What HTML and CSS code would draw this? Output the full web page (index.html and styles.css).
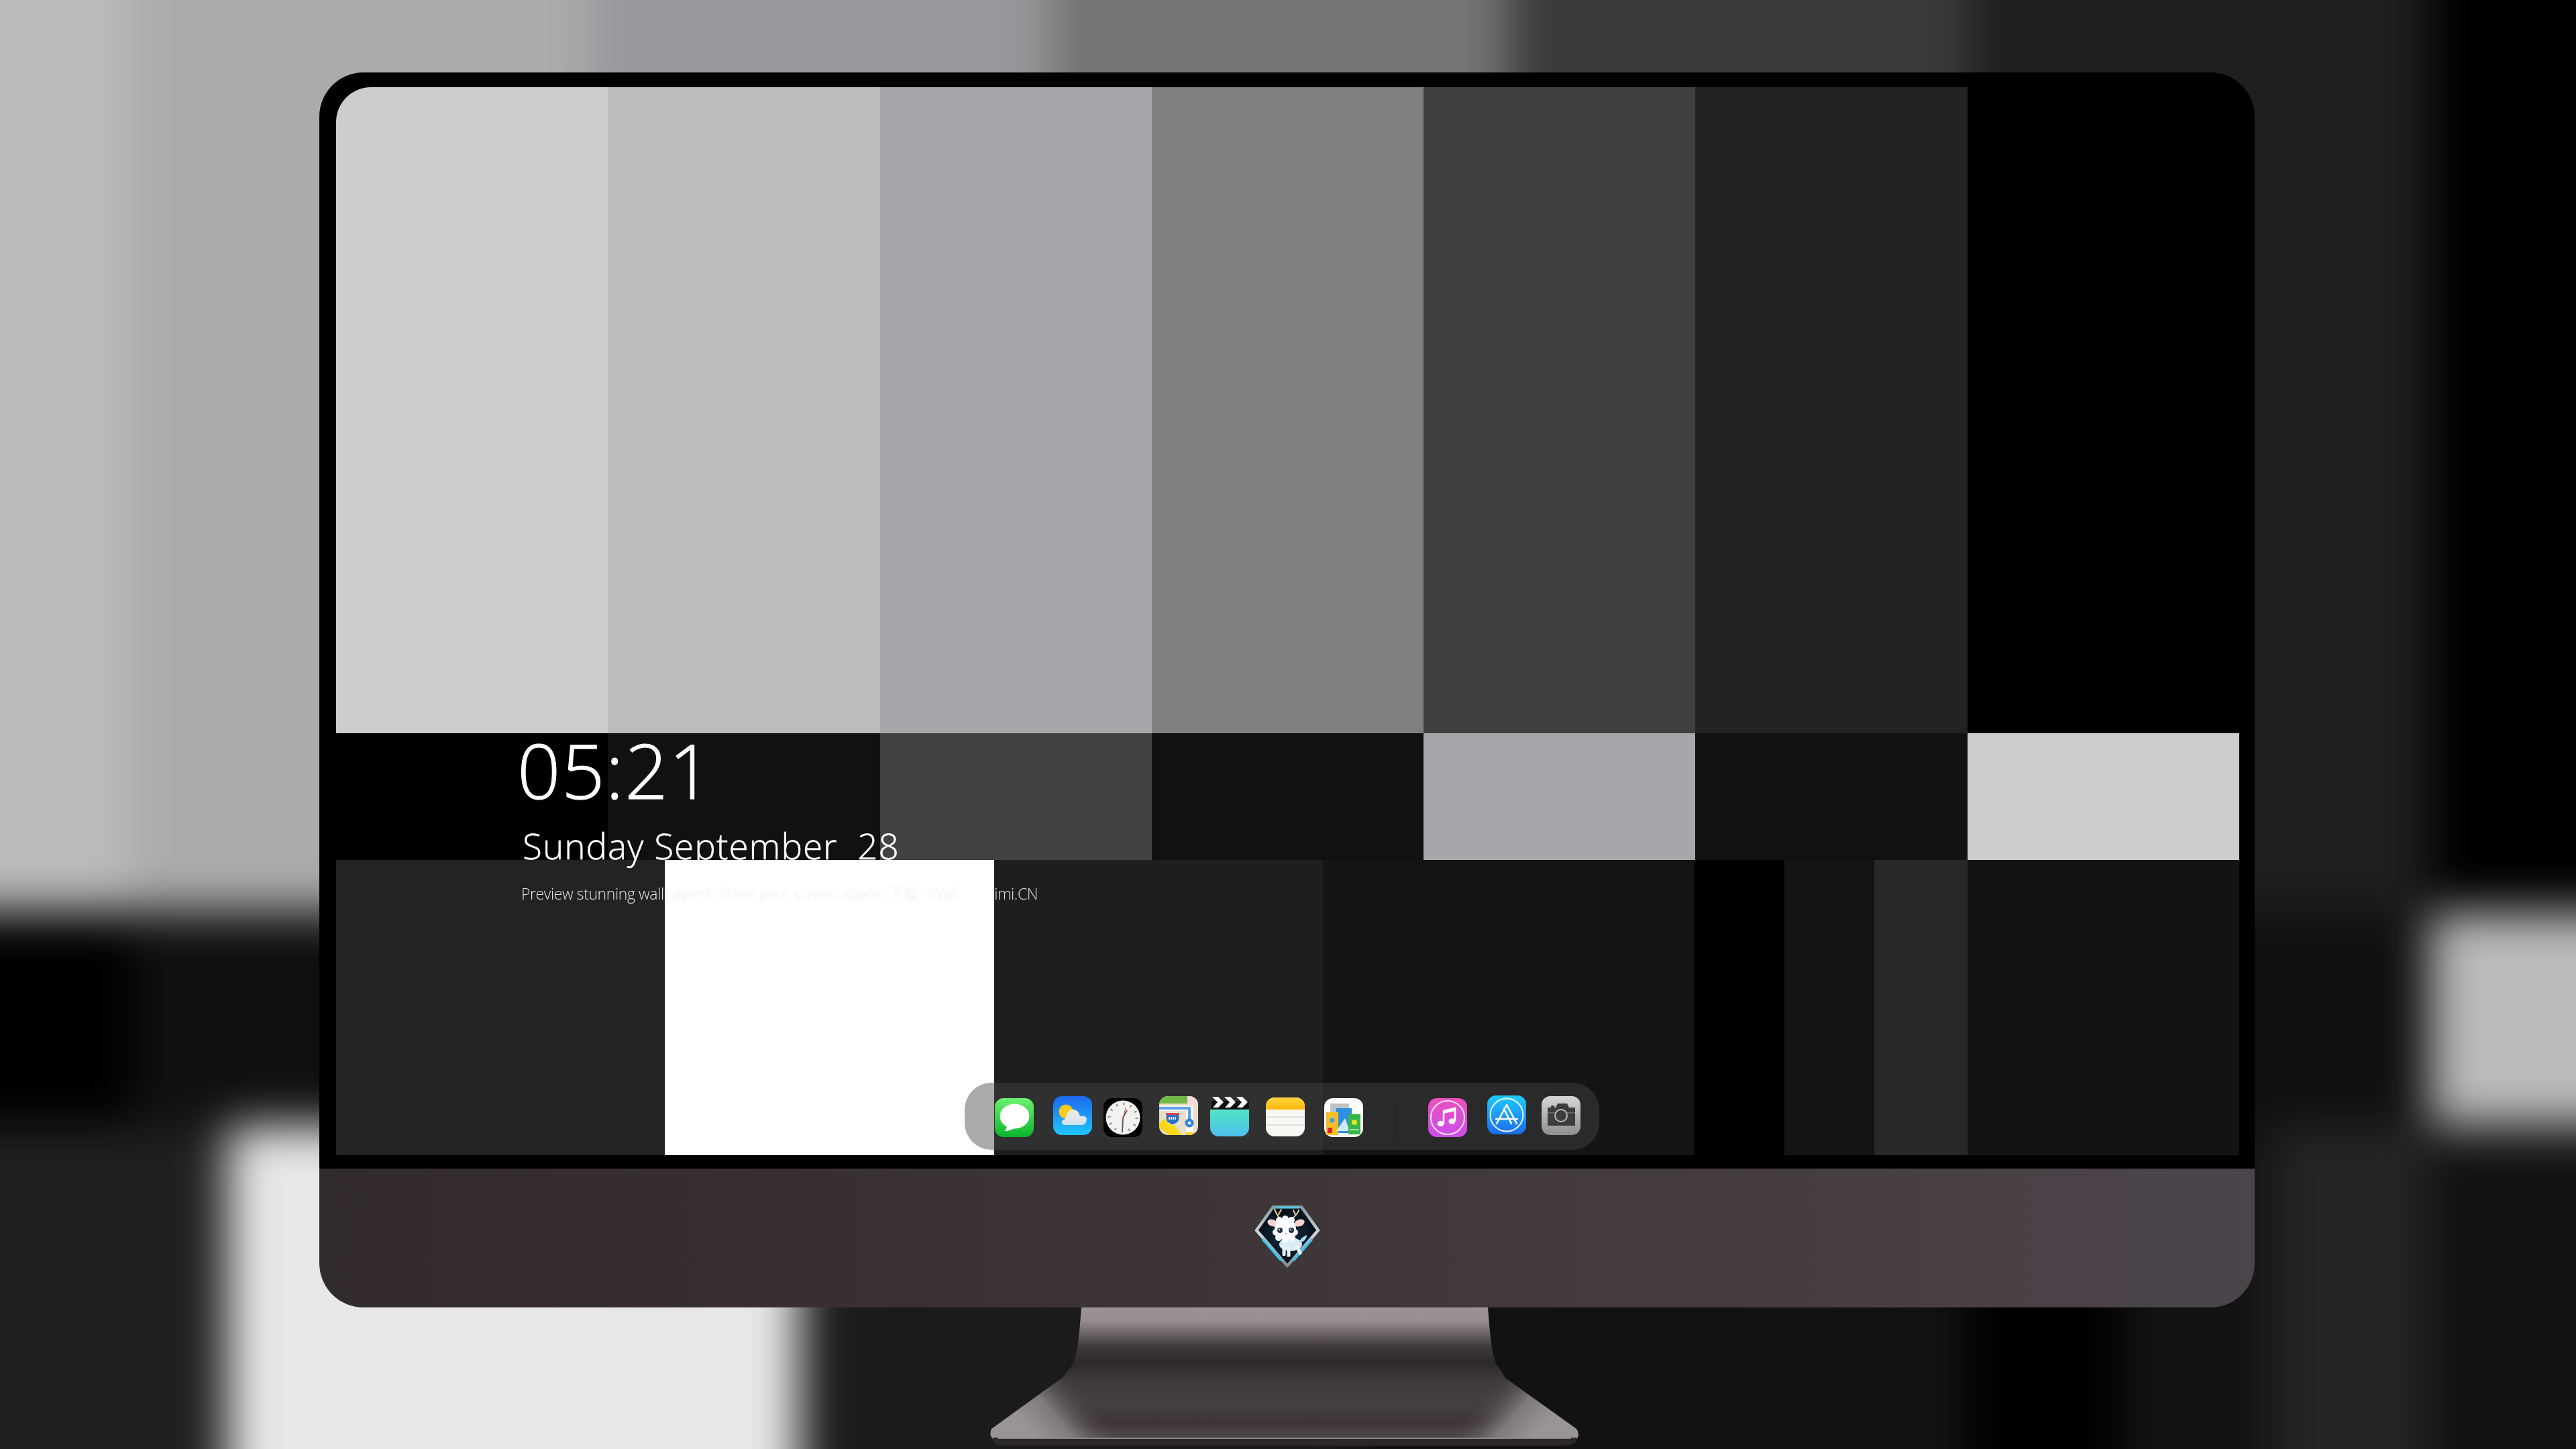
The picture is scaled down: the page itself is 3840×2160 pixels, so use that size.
FILE: index.html
```html
<!DOCTYPE html>
<html lang="en">
<head>
<meta charset="utf-8">
<title>Desktop preview</title>
<link rel="stylesheet" href="styles.css">
</head>
<body>
<div class="backdrop wall" aria-hidden="true">
  <div class="row row-a"><i class="c1"></i><i class="c2"></i><i class="c3"></i><i class="c4"></i><i class="c5"></i><i class="c6"></i><i class="c7"></i></div>
  <div class="row row-b"><i class="k"></i><i class="d1"></i><i class="c5b"></i><i class="d1"></i><i class="c3"></i><i class="d1"></i><i class="c1"></i></div>
  <div class="row row-c"><i class="e1"></i><i class="e2"></i><i class="e3"></i><i class="e4"></i><i class="k"></i><i class="e4"></i><i class="e5"></i><i class="e6"></i></div>
</div>
<main class="stage">
  <section class="monitor">
    <div class="bezel">
      <div class="screen">
        <div class="wall">
          <div class="row row-a"><i class="c1"></i><i class="c2"></i><i class="c3"></i><i class="c4"></i><i class="c5"></i><i class="c6"></i><i class="c7"></i></div>
          <div class="row row-b"><i class="k"></i><i class="d1"></i><i class="c5b"></i><i class="d1"></i><i class="c3"></i><i class="d1"></i><i class="c1"></i></div>
          <div class="row row-c"><i class="e1"></i><i class="e2 top"><span class="ghost">papers. Shine your screen space. 下载 · Wall</span></i><i class="e3"></i><i class="e4"></i><i class="k"></i><i class="e4"></i><i class="e5"></i><i class="e6"></i></div>
        </div>
        <div class="lock">
          <div class="time">05:21</div>
          <div class="date">Sunday September&nbsp;&nbsp;28</div>
          <div class="tag"><span>Preview stunning wall</span><span>imi.CN</span></div>
        </div>
        <nav class="dock">
          <svg class="icon i-messages" viewBox="0 0 58 58"><defs><linearGradient id="gm" x1="0" y1="0" x2="0" y2="1"><stop offset="0" stop-color="#6af26f"/><stop offset="1" stop-color="#0cb52c"/></linearGradient></defs><rect width="58" height="58" rx="13" fill="url(#gm)"/><ellipse cx="29.500" cy="27" rx="22" ry="18.500" fill="#fff"/><path d="M17 39 C18 44 17 47 14 49 C21 49 26 47 30 44Z" fill="#fff"/></svg>
          <svg class="icon i-weather" viewBox="0 0 58 58"><defs><linearGradient id="gw" x1="0" y1="0" x2="0" y2="1"><stop offset="0" stop-color="#1d68ee"/><stop offset="1" stop-color="#1fc6fc"/></linearGradient><linearGradient id="gc" x1="0" y1="0" x2="0" y2="1"><stop offset="0" stop-color="#f3ecd8"/><stop offset="1" stop-color="#cfe3f4"/></linearGradient></defs><rect width="58" height="58" rx="13" fill="url(#gw)"/><circle cx="19" cy="23" r="10.500" fill="#fbc916"/><path d="M18 43 C11 43 11 35 18 34 C19 28 22 20 30 20 C37 20 39 27 40 30 C48 28 52 33 49 38 C48 42 45 43 42 43Z" fill="url(#gc)"/></svg>
          <svg class="icon i-clock" viewBox="0 0 58 58"><rect width="58" height="58" rx="13" fill="#000"/><circle cx="29" cy="29" r="25.500" fill="#f2f2f0"/><circle cx="29" cy="29" r="20.500" fill="none" stroke="#8a8a8a" stroke-width="4" stroke-dasharray="2 8.730"/><path d="M29 29 L35 18" stroke="#4c4c4c" stroke-width="1.800"/><path d="M29 29 L28 50" stroke="#5e5e5e" stroke-width="2"/><path d="M29 30 L33 14" stroke="#d9534f" stroke-width="1"/></svg>
          <svg class="icon i-maps" viewBox="0 0 58 58"><defs><clipPath id="cm"><rect width="58" height="58" rx="13"/></clipPath></defs><g clip-path="url(#cm)"><rect width="58" height="58" fill="#e6dfc9"/><rect width="42" height="11" fill="#74b84a"/><rect x="42" width="16" height="13" fill="#f3d8dc"/><path d="M-4 44 L12 30 L34 58 L20 62Z" fill="#fbd817"/><rect x="40" y="14" width="11" height="44" fill="#f8f6ef"/><path d="M0 18 H45 V38" fill="none" stroke="#f8f6ef" stroke-width="8"/><path d="M0 18 H45 V38" fill="none" stroke="#5aa0ef" stroke-width="4"/><path d="M10 25 H30 V33 C30 39 24 41 20 43 C16 41 10 39 10 33Z" fill="#2f6fc8" stroke="#eee" stroke-width="1"/><rect x="10" y="25" width="20" height="3" fill="#d9474a"/><path d="M14 33 H26" stroke="#e6ecf5" stroke-width="4" stroke-dasharray="2 1"/><circle cx="45" cy="40" r="6.500" fill="#2a80e6"/><circle cx="45" cy="40" r="2.500" fill="#e6f0ff"/><rect x="40" y="54" width="11" height="4" fill="#f2d20e"/></g></svg>
          <svg class="icon i-clips" viewBox="0 0 58 60"><defs><linearGradient id="gv" x1="0" y1="0" x2="0" y2="1"><stop offset="0" stop-color="#50e5c4"/><stop offset="1" stop-color="#4fbff0"/></linearGradient></defs><path d="M0 20 H58 V47 A13 13 0 0 1 45 60 H13 A13 13 0 0 1 0 47Z" fill="url(#gv)"/><path d="M1 19 L3 7 L58 7 L58 19Z" fill="#111"/><path d="M3 1 H12 L20 9 L12 17 H4 L11 9Z M21 1 H30 L38 9 L30 17 H22 L29 9Z M39 1 H48 L56 9 L48 17 H40 L47 9Z" fill="#fff"/></svg>
          <svg class="icon i-notes" viewBox="0 0 58 58"><defs><linearGradient id="gn" x1="0" y1="0" x2="0" y2="1"><stop offset="0" stop-color="#ffd73a"/><stop offset="1" stop-color="#fcb70f"/></linearGradient></defs><rect width="58" height="58" rx="13" fill="#f8f8f4"/><path d="M0 18 V13 A13 13 0 0 1 13 0 H45 A13 13 0 0 1 58 13 V18Z" fill="url(#gn)"/><path d="M0 29 H58 M0 41 H58" stroke="#d6d6d2" stroke-width="1.500"/></svg>
          <svg class="icon i-news" viewBox="0 0 58 58"><rect width="58" height="58" rx="13" fill="#fcfcfa"/><rect x="9" y="8" width="28" height="16" fill="#bfc3c6"/><rect x="18" y="15" width="23" height="37" fill="#2f8fe0"/><rect x="3" y="21" width="18" height="34" fill="#f3bf26"/><rect x="5" y="44" width="7" height="8" fill="#e02424"/><circle cx="12" cy="33" r="3.500" fill="#3d9be0"/><path d="M18 49 L31 30 L38 49Z" fill="#cfeaf7"/><rect x="36" y="24" width="18" height="30" fill="#38b54a"/><circle cx="45" cy="36" r="4" fill="#e5e620"/><rect x="38" y="46" width="14" height="2" fill="#9fe0a8"/></svg>
          <span class="divider"></span>
          <svg class="icon i-music" viewBox="0 0 58 58"><defs><linearGradient id="gi" x1="0" y1="0" x2="0" y2="1"><stop offset="0" stop-color="#ec50bd"/><stop offset="1" stop-color="#cd4cec"/></linearGradient></defs><rect width="58" height="58" rx="13" fill="url(#gi)"/><circle cx="29" cy="29" r="25" fill="none" stroke="#fbe6f8" stroke-width="2"/><path d="M23 38 V19 L40 15 V34" fill="none" stroke="#fff" stroke-width="2.600"/><path d="M23 21 L40 17" stroke="#fff" stroke-width="4"/><ellipse cx="18.500" cy="38" rx="5" ry="4.200" fill="#fff"/><ellipse cx="35.500" cy="34.500" rx="5" ry="4.200" fill="#fff"/></svg>
          <svg class="icon i-store" viewBox="0 0 58 58"><defs><linearGradient id="ga" x1="0" y1="0" x2="0" y2="1"><stop offset="0" stop-color="#1fcbfb"/><stop offset="1" stop-color="#1b6cec"/></linearGradient></defs><rect width="58" height="58" rx="13" fill="url(#ga)"/><circle cx="29" cy="29" r="24.500" fill="none" stroke="#e8f6ff" stroke-width="2"/><path d="M29 14 L14 42 M29 14 L44 42 M25 20 L36 42" fill="none" stroke="#fff" stroke-width="2.600" stroke-linecap="round"/><path d="M13 35 H45" stroke="#fff" stroke-width="2.400" stroke-linecap="round"/></svg>
          <svg class="icon i-camera" viewBox="0 0 58 58"><defs><linearGradient id="gp" x1="0" y1="0" x2="0" y2="1"><stop offset="0" stop-color="#d6d6d6"/><stop offset="1" stop-color="#8f8f8f"/></linearGradient></defs><rect width="58" height="58" rx="13" fill="url(#gp)"/><path d="M9 17 H14 V14 H19 V17 H21 L24 11 H38 L41 17 H50 V44 H9Z" fill="#3d3d3d"/><rect x="9" y="24" width="41" height="1.500" fill="#6b6b6b"/><circle cx="29" cy="29" r="9" fill="#3d3d3d" stroke="#bdbdbd" stroke-width="2"/></svg>
        </nav>
      </div>
    </div>
    <footer class="chin">
      <svg class="badge" viewBox="0 0 98 94" aria-label="Deer logo">
        <defs>
          <linearGradient id="gs" x1="0" y1="0" x2="0" y2="1"><stop offset="0" stop-color="#8a99a3"/><stop offset=".45" stop-color="#cfd6da"/><stop offset="1" stop-color="#7f8c94"/></linearGradient>
          <radialGradient id="gd"><stop offset="0" stop-color="#113048"/><stop offset="1" stop-color="#040d15"/></radialGradient>
        </defs>
        <path d="M28 2 H70 L95 37 L49 90 L3 37Z" fill="url(#gd)" stroke="url(#gs)" stroke-width="4.500" stroke-linejoin="round"/>
        <path d="M31 3 H67" stroke="#4fc6ea" stroke-width="3"/>
        <path d="M12 50 L40 82 M86 50 L58 82" stroke="#3cc4ee" stroke-width="3.500"/>
        <path d="M38 20 C34 14 31 10 30 5 M36 13 L40 6 M57 20 C61 14 65 12 66 7 M61 14 L58 7" fill="none" stroke="#e0cf9a" stroke-width="2" stroke-linecap="round"/>
        <ellipse cx="27" cy="26" rx="8" ry="5" fill="#f4d3d0" transform="rotate(20 27 26)"/>
        <ellipse cx="67" cy="26" rx="8" ry="5" fill="#f4d3d0" transform="rotate(-20 67 26)"/>
        <ellipse cx="54" cy="58" rx="17" ry="10" fill="#d9edf7"/>
        <path d="M44 62 L44 73 M51 64 L51 75 M64 62 L68 71" stroke="#eaf4f9" stroke-width="5" stroke-linecap="round"/>
        <path d="M68 55 C74 54 78 50 78 44 C74 46 70 48 68 52Z" fill="#a8dcec"/>
        <g fill="#fbfcfd">
          <circle cx="46" cy="35" r="16"/><circle cx="46" cy="20" r="5"/><circle cx="37" cy="22" r="5"/><circle cx="55" cy="22" r="5"/>
          <circle cx="32" cy="40" r="5"/><circle cx="60" cy="40" r="5"/><circle cx="36" cy="48" r="5"/><circle cx="56" cy="48" r="5"/><circle cx="46" cy="51" r="5"/>
        </g>
        <circle cx="38" cy="37" r="4" fill="#22384a"/><circle cx="55" cy="37" r="4" fill="#22384a"/>
        <circle cx="37" cy="36" r="1.200" fill="#fff"/><circle cx="54" cy="36" r="1.200" fill="#fff"/>
        <circle cx="46.500" cy="42" r="1.300" fill="#d88"/>
        <path d="M41 77 H47 M49 78 H55" stroke="#000" stroke-width="3"/>
      </svg>
    </footer>
  </section>
  <svg class="stand" viewBox="0 0 890 211" aria-hidden="true">
    <defs>
      <linearGradient id="st" x1="0" y1="0" x2="0" y2="1"><stop offset="0" stop-color="#9b9397"/><stop offset=".1" stop-color="#968e92"/><stop offset=".2" stop-color="#6a6367"/><stop offset=".3" stop-color="#3f393c"/><stop offset=".42" stop-color="#2d282b"/><stop offset=".55" stop-color="#3e393c"/><stop offset=".72" stop-color="#444042"/><stop offset=".88" stop-color="#3e3538"/><stop offset=".96" stop-color="#4a4547"/></linearGradient>
      <linearGradient id="fl" gradientUnits="userSpaceOnUse" x1="70" y1="190" x2="144" y2="126"><stop offset="0" stop-color="#9a9498"/><stop offset=".45" stop-color="#7f797c"/><stop offset="1" stop-color="#4a4547" stop-opacity="0"/></linearGradient>
      <linearGradient id="fr" gradientUnits="userSpaceOnUse" x1="820" y1="190" x2="746" y2="126"><stop offset="0" stop-color="#9a9498"/><stop offset=".45" stop-color="#7f797c"/><stop offset="1" stop-color="#4a4547" stop-opacity="0"/></linearGradient>
    </defs>
    <path d="M142 0 H748 C752 50 754 82 768 94 Q772 104 778 108 L880 181 Q886 190 880 196 H10 Q4 190 8 181 L109 108 Q116 104 122 94 C136 82 138 50 142 0Z" fill="url(#st)"/>
    <path d="M109 108 L8 181 Q4 190 10 196 H300 L170 108Z" fill="url(#fl)"/>
    <path d="M778 108 L880 181 Q886 190 880 196 H590 L720 108Z" fill="url(#fr)"/>
    <path d="M10 194 H880 C882 203 874 206 860 206 H30 C16 206 8 203 10 194Z" fill="#2c2729"/>
    <path d="M18 195 H872" stroke="#8b8588" stroke-width="2"/>
  </svg>
</main>
</body>
</html>
```
FILE: styles.css
```css
* { box-sizing: border-box; }
html, body { margin: 0; padding: 0; }
body {
  width: 3840px;
  height: 2160px;
  overflow: hidden;
  position: relative;
  background: #111;
  font-family: "Open Sans", "Noto Sans CJK SC", sans-serif;
}

.backdrop {
  position: absolute;
  left: -488px;
  top: -268px;
  transform-origin: 0 0;
  transform: scale(1.69);
  filter: blur(20px) brightness(.91);
}
.backdrop .row-c { grid-template-columns: 490px 504px 477px 553px 135px 134px 139px 405px; }

.wall { width: 2837px; display: flex; flex-direction: column; }
.row { display: grid; }
.row i { display: block; font-style: normal; }
.row-a { height: 963px; grid-template-columns: repeat(7, 1fr); }
.row-b { height: 189px; grid-template-columns: repeat(7, 1fr); }
.row-c { height: 440px; grid-template-columns: 490px 491px 490px 553px 135px 134px 139px 405px; }

.c1 { background: #cdcdcd; }
.c2 { background: #bbbcbe; }
.c3 { background: #a6a7aa; }
.c4 { background: #7f7f7f; }
.c5 { background: #404040; }
.c5b { background: #424242; }
.c6 { background: #222; }
.c7, .k { background: #000; }
.d1 { background: #111; }
.e1 { background: #232323; }
.e2 { background: #fff; }
.e3 { background: #1e1e1e; }
.e4 { background: #141414; }
.e5 { background: #282828; }
.e6 { background: #131313; }

.stage { position: relative; padding: 108px 0 0 476px; }

.monitor { width: 2885px; border-radius: 66px; overflow: hidden; }
.bezel { background: #000; padding: 22px 23px 20px 25px; }
.screen {
  position: relative;
  width: 2837px;
  height: 1592px;
  border-radius: 52px 52px 0 0;
  overflow: hidden;
}

.top { position: relative; z-index: 2; }
.ghost {
  position: absolute;
  left: 0;
  top: 35px;
  font-size: 23px;
  line-height: 30px;
  letter-spacing: -.4px;
  font-weight: 300;
  color: #eeeeee;
  white-space: nowrap;
  filter: blur(1.4px);
}

.lock {
  position: absolute;
  z-index: 1;
  left: 276px;
  top: 952px;
  color: #fff;
  font-weight: 300;
  filter: blur(.5px);
}
.time { font-size: 113px; line-height: 130px; margin-left: -6px; letter-spacing: 1.400px; -webkit-text-stroke: 1px #fff; }
.date { font-size: 53px; line-height: 72px; margin-top: 13px; margin-left: 2px; letter-spacing: 1px; white-space: nowrap; -webkit-text-stroke: .5px #fff; }
.tag {
  display: flex;
  justify-content: space-between;
  width: 770px;
  margin-top: 20px;
  font-size: 23px;
  line-height: 30px;
  letter-spacing: -.4px;
  color: #e2e2e2;
}

.dock {
  position: absolute;
  z-index: 3;
  left: 937px;
  top: 1484px;
  width: 946px;
  height: 100px;
  display: flex;
  align-items: flex-start;
  border-radius: 40px;
  background: rgba(69, 69, 69, .46);
}
.icon { display: block; width: 58px; height: 58px; flex: none; filter: blur(.7px); }
.i-messages { margin: 23px 0 0 45px; }
.i-weather { margin: 20px 0 0 29px; }
.i-clock { margin: 23px 0 0 17px; }
.i-maps { margin: 20px 0 0 25px; }
.i-clips { margin: 20px 0 0 18px; height: 60px; }
.i-notes { margin: 22px 0 0 25px; }
.i-news { margin: 23px 0 0 29px; }
.divider { width: 1px; height: 52px; margin: 31px 0 0 49px; background: #1f1f1f; flex: none; }
.i-music { margin: 23px 0 0 47px; }
.i-store { margin: 19px 0 0 30px; }
.i-camera { margin: 20px 0 0 23px; }

.chin {
  height: 207px;
  display: flex;
  justify-content: center;
  padding-top: 55px;
  background: linear-gradient(90deg, #322b2e 0%, #383033 30%, #3e3639 50%, #453c40 72%, #4a4147 88%, #4a444b 100%);
}
.badge { display: block; width: 98px; height: 94px; filter: blur(.6px); }

.stand { display: block; width: 890px; height: 211px; margin-left: 994px; }
```
